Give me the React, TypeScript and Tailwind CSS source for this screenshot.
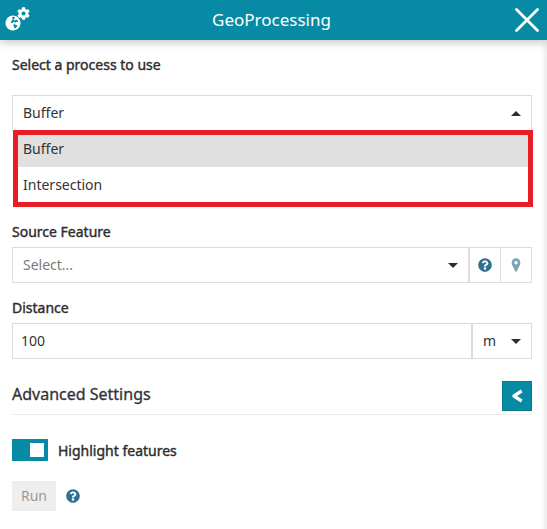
import type { ReactNode } from 'react';
import { FaCog, FaQuestionCircle } from 'react-icons/fa';

function Caret({ up = false }: { up?: boolean }) {
  return (
    <svg width="10" height="5" viewBox="0 0 10 5" className="shrink-0 fill-[#2d2d2d]">
      <path d={up ? 'M0 5 5 0l5 5z' : 'M0 0h10L5 5z'} />
    </svg>
  );
}

function Globe() {
  return (
    <svg width="16" height="16" viewBox="0 0 16 16" className="absolute top-[15px] left-[5px]">
      <circle cx="8" cy="8" r="7.6" className="fill-white" />
      <path className="fill-[#078aa3]" d="m7.200 2 2.200-.2.5 1.200-1.300 1.500.9 1.300 1.500-1.300 1.600.8.600 1.700-1.500-.3-1.500.8-1.800-.4-1 1.100-1.600-.5.400-1.500 1.400-1.400z" />
      <path className="fill-[#078aa3]" d="m8 9.800 1.700-.5 1.500.8 1.300.1-.6 1.600-1.800 1.600-1-.6-.2-1.500z" />
    </svg>
  );
}

function Pin() {
  return (
    <svg width="10" height="14" viewBox="0 0 10 14" className="fill-[#7ba4b6]">
      <path fillRule="evenodd" d="M5 .3A4.400 4.400 0 0 0 .6 4.700C.6 7.200 3 9.700 4 13.100c.3.800 1.700.8 2 0C7 9.700 9.400 7.200 9.400 4.700A4.400 4.400 0 0 0 5 .3zM5 3a1.700 1.700 0 1 1 0 3.400A1.700 1.700 0 0 1 5 3z" />
    </svg>
  );
}

function Label({ children }: { children: ReactNode }) {
  return (
    <div className="h-5 text-[14px] leading-5 whitespace-nowrap text-[#2d2d2d] [-webkit-text-stroke:0.4px_#2d2d2d]">
      {children}
    </div>
  );
}

export default function App() {
  return (
    <div className="relative h-[529px] w-[547px] overflow-hidden bg-white font-['Noto_Sans',sans-serif] text-[14px] text-[#333]">
      <header className="relative z-10 flex h-10 items-center bg-[#078aa3] text-white shadow-[0_2px_9px_rgba(0,0,0,0.25)]">
        <div className="relative h-10 w-10">
          <Globe />
          <FaCog size={13} className="absolute top-[7px] left-[17px]" />
        </div>
        <h1 className="flex-1 pr-3 text-center text-[17px] leading-10">GeoProcessing</h1>
        <svg width="24" height="24" viewBox="0 0 24 24" className="mr-2 fill-none stroke-white stroke-[2.8px]" strokeLinecap="round">
          <path d="M1.5 1.5l21 21M22.5 1.5l-21 21" />
        </svg>
      </header>

      <main className="flex flex-col pr-[15px] pl-3">
        <div className="pt-[15px]">
          <Label>Select a process to use</Label>
        </div>
        <div className="mt-5 flex h-[35px] items-center justify-between border border-b-0 border-[#dcdcdc] pr-[10px] pl-[10px]">
          <span className="pb-0.5">Buffer</span>
          <Caret up />
        </div>
        <div className="-mr-px ml-px h-[77px] border-5 border-[#ea1d25]">
          <div className="flex h-8 items-center bg-[#e0e0e0] pb-[5px] pl-[5px]">Buffer</div>
          <div className="flex h-[35px] items-center pl-[5px]">Intersection</div>
        </div>

        <div className="mt-[15px]">
          <Label>Source Feature</Label>
        </div>
        <div className="mt-[5px] flex h-9 border border-[#dcdcdc]">
          <div className="flex flex-1 items-center justify-between pr-[10px] pl-[10px] text-[#7b7b7b]">
            <span className="pb-0.5">Select...</span>
            <Caret />
          </div>
          <div className="flex w-8 items-center justify-center border-l-2 border-[#dcdcdc] text-[#31708f]">
            <FaQuestionCircle size={14} />
          </div>
          <div className="flex w-[31px] items-center justify-center border-l border-[#dcdcdc]">
            <Pin />
          </div>
        </div>

        <div className="mt-[15px]">
          <Label>Distance</Label>
        </div>
        <div className="mt-[5px] flex h-9 border border-[#dcdcdc]">
          <div className="flex flex-1 items-center pb-0.5 pl-2">100</div>
          <div className="flex w-[60px] items-center justify-between border-l-2 border-[#dcdcdc] pr-[10px] pl-[10px]">
            <span className="pb-0.5">m</span>
            <Caret />
          </div>
        </div>

        <div className="mt-[22px] flex h-[34px] items-start justify-between border-b border-[#eee]">
          <h2 className="text-[16px] leading-[27px] [-webkit-text-stroke:0.3px_#333]">Advanced Settings</h2>
          <button className="flex h-[30px] w-[30px] items-center justify-center border border-[#067a90] bg-[#078aa3]">
            <svg width="12" height="14" viewBox="0 0 12 14" className="fill-none stroke-white stroke-[3.4px]" strokeLinejoin="round">
              <path d="M10.700 1.900 3 7l7.700 5.100" />
            </svg>
          </button>
        </div>

        <div className="mt-6 flex h-[22px] items-center">
          <div className="flex h-[22px] w-9 items-center justify-end bg-[#078aa3] pr-1">
            <div className="h-[14px] w-[14px] bg-white" />
          </div>
          <div className="pt-px pl-[10px]">
            <Label>Highlight features</Label>
          </div>
        </div>
        <div className="mt-5 flex h-[30px] items-center">
          <button className="h-[30px] w-11 bg-[#eee] pb-0.5 text-[14px] text-[#999]">Run</button>
          <FaQuestionCircle size={14} className="ml-[10px] text-[#31708f]" />
        </div>
      </main>

      <div className="absolute top-10 right-0 bottom-0 w-[6px] bg-linear-to-l from-[#ececec] to-white" />
    </div>
  );
}
